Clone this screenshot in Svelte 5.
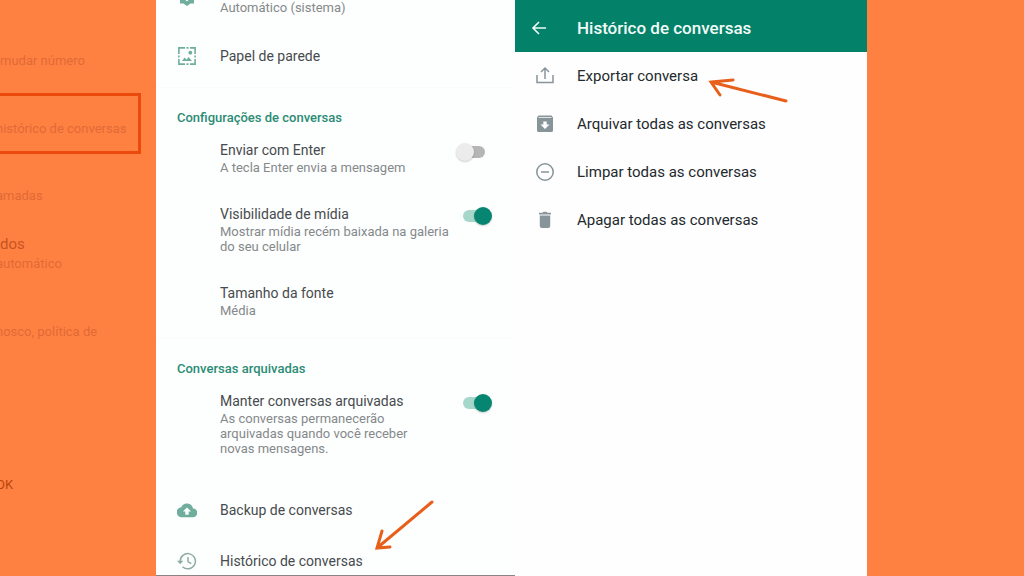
<script>
  let enterSends = false;
  let mediaVisible = true;
  let keepArchived = true;

  const historyActions = [
    { icon: 'export', label: 'Exportar conversa', marked: true },
    { icon: 'archive', label: 'Arquivar todas as conversas' },
    { icon: 'clear', label: 'Limpar todas as conversas' },
    { icon: 'trash', label: 'Apagar todas as conversas' }
  ];
</script>

<main class="page">
  <aside class="backdrop">
    <p class="number">mudar número</p>
    <p class="highlight">histórico de conversas</p>
    <p class="calls">amadas</p>
    <p class="data">dos</p>
    <p>automático</p>
    <p class="policy">nosco, política de</p>
    <p class="brand">OK</p>
  </aside>

  <section class="settings">
    <div class="group first">
      <button class="row theme">
        <svg class="icon cut" viewBox="0 0 20 6" aria-hidden="true">
          <path d="M3 0h5.500l1.500 1.500L11.500 0H17v3.500h-3.500L10 6 6.500 3.500H3z" />
        </svg>
        <span class="sub">Automático (sistema)</span>
      </button>
      <button class="row">
        <svg class="icon" viewBox="0 0 20 20" aria-hidden="true">
          <path
            d="M1.900 8V1.900H8M9.500 1.900h2M13 1.900h5.100V8M18.100 9.500v2M18.100 13v5.100H13M11.500 18.100h-2M8 18.100H1.900V13M1.900 11.500v-2"
            fill="none"
            stroke="currentColor"
            stroke-width="1.600"
          />
          <path d="M5 15l2.600-3.500 2 2.200 2-2.700L15 15z" />
          <circle cx="13.300" cy="6.700" r="1.900" />
        </svg>
        <span class="title">Papel de parede</span>
      </button>
    </div>

    <div class="group">
      <h2>Configurações de conversas</h2>
      <div class="rows">
        <label class="row">
          <span class="text">
            <span class="title">Enviar com Enter</span>
            <span class="sub">A tecla Enter envia a mensagem</span>
          </span>
          <input type="checkbox" bind:checked={enterSends} />
        </label>
        <label class="row">
          <span class="text">
            <span class="title">Visibilidade de mídia</span>
            <span class="sub">Mostrar mídia recém baixada na galeria<br />do seu celular</span>
          </span>
          <input type="checkbox" bind:checked={mediaVisible} />
        </label>
        <button class="row">
          <span class="text">
            <span class="title">Tamanho da fonte</span>
            <span class="sub">Média</span>
          </span>
        </button>
      </div>
    </div>

    <div class="group last">
      <h2>Conversas arquivadas</h2>
      <label class="row">
        <span class="text">
          <span class="title">Manter conversas arquivadas</span>
          <span class="sub">As conversas permanecerão<br />arquivadas quando você receber<br />novas mensagens.</span>
        </span>
        <input type="checkbox" bind:checked={keepArchived} />
      </label>

      <div class="rows links">
        <button class="row">
          <svg class="icon" viewBox="0 0 20 20" aria-hidden="true">
            <path
              fill-rule="evenodd"
              d="M16 8.400A6.200 6.200 0 0 0 4.300 7.200 5 5 0 0 0 5 17.200h10.800a4.400 4.400 0 0 0 .2-8.800zM11.700 11.600v3.200H8.300v-3.200H5.900L10 7.400l4.100 4.200z"
            />
          </svg>
          <span class="title">Backup de conversas</span>
        </button>
        <button class="row">
          <svg class="icon history" viewBox="0 0 20 20" aria-hidden="true">
            <path
              d="M3.200 10.500a7.600 7.600 0 1 1 2.300 5.200M11 6v4.700l3.300 2"
              fill="none"
              stroke="currentColor"
              stroke-width="1.500"
            />
            <path d="M0 9.800h6.400l-3.200 3.500z" />
          </svg>
          <span class="title marked">
            Histórico de conversas
            <svg class="arrow down" viewBox="0 0 60 52" aria-hidden="true">
              <path d="M58 3L3 49M8 32L3 49L16 48" />
            </svg>
          </span>
        </button>
      </div>
    </div>
  </section>

  <section class="history-panel">
    <header>
      <button class="back" aria-label="Voltar">
        <svg viewBox="0 0 16 16" aria-hidden="true">
          <path d="M15 8H2M8 2L2 8l6 6" />
        </svg>
      </button>
      <h1>Histórico de conversas</h1>
    </header>

    {#each historyActions as action}
      <button class="action">
        <svg class="icon" viewBox="0 0 20 20" aria-hidden="true">
          {#if action.icon === 'export'}
            <path
              d="M2 9v7.500h16V9M10 13V2.500M6 6l4-4 4 4"
              fill="none"
              stroke="currentColor"
              stroke-width="1.500"
            />
          {:else if action.icon === 'archive'}
            <path
              fill-rule="evenodd"
              d="M3.500 1.500h13L18 3.500V16.500a1.500 1.500 0 0 1-1.500 1.500h-13A1.500 1.500 0 0 1 2 16.500V3.500zM3.500 3.200v.8h13v-.8zM8.300 7.500v3H5.500l4.500 4.500 4.500-4.500h-2.800v-3z"
            />
          {:else if action.icon === 'clear'}
            <path
              d="M6 10h8M10 1.800a8.200 8.200 0 1 0 0 16.400 8.200 8.200 0 0 0 0-16.400z"
              fill="none"
              stroke="currentColor"
              stroke-width="1.500"
            />
          {:else}
            <path d="M4 2.800h3.500l1-1h3l1 1H16v1.600H4zM4.800 5.500h10.400V16a2 2 0 0 1-2 2H6.800a2 2 0 0 1-2-2z" />
          {/if}
        </svg>
        <span class:marked={action.marked}>
          {action.label}
          {#if action.marked}
            <svg class="arrow side" viewBox="0 0 80 26" aria-hidden="true">
              <path d="M78 23L3 4M25 2L3 4L12 17" />
            </svg>
          {/if}
        </span>
      </button>
    {/each}
  </section>
</main>

<style>
  :global(body) {
    margin: 0;
    background: #ff8142;
  }

  .page {
    display: grid;
    grid-template-columns: 156fr 359fr 352fr 157fr;
    min-height: 100vh;
    font-family: Roboto, 'Liberation Sans', sans-serif;
    font-size: 15px;
    line-height: 20px;
  }

  h1,
  h2,
  p {
    margin: 0;
  }

  button {
    border: none;
    padding: 0;
    background: none;
    color: inherit;
    font: inherit;
    text-align: left;
    cursor: pointer;
  }

  .backdrop {
    padding-top: 53px;
    overflow: hidden;
    color: #df6a36;
    font-size: 13px;
    line-height: 16px;
    text-indent: -4px;
    white-space: nowrap;
  }

  .number {
    text-indent: 0;
  }

  .highlight {
    margin: 24px 15px 34px 0;
    padding: 25px 0 14px;
    border: 3px solid #ec4a0c;
    border-left: none;
  }

  .data {
    margin: 30px 0 2px;
    color: #c9531f;
    font-size: 15px;
    line-height: 20px;
    text-indent: 0;
  }

  .policy {
    margin-top: 52px;
  }

  .brand {
    margin-top: 137px;
    color: #b8460f;
  }

  .settings {
    box-sizing: border-box;
    border-bottom: 1px solid #8a8583;
    background: #fdfefe;
    color: #474b4d;
  }

  .group {
    padding: 20px 23px 20px 21px;
    border-bottom: 1px solid #fafbfb;
  }

  .first {
    padding-top: 0;
    padding-bottom: 21px;
  }

  .last {
    padding-bottom: 4px;
    border-bottom: none;
  }

  h2 {
    margin-bottom: 12px;
    color: #2b8c74;
    font-size: 13px;
    font-weight: 500;
    line-height: 20px;
  }

  .rows {
    display: flex;
    flex-direction: column;
    gap: 29px;
  }

  .row {
    display: flex;
    align-items: flex-start;
    width: 100%;
  }

  .theme {
    margin-bottom: 31px;
  }

  .text {
    flex: 1;
    padding-left: 43px;
  }

  .title,
  .sub {
    display: block;
  }

  .title {
    font-size: 14px;
  }

  .sub {
    color: #85898b;
    font-size: 13px;
    line-height: 15px;
  }

  .icon {
    flex: none;
    width: 20px;
    height: 20px;
    margin-right: 23px;
    fill: currentColor;
    color: #6fae9d;
  }

  .cut {
    height: 6px;
  }

  .history {
    color: #8fada5;
  }

  .links {
    gap: 31px;
    margin-top: 44px;
  }

  input {
    position: relative;
    flex: none;
    width: 36px;
    height: 18px;
    margin: 3px 0 0;
    appearance: none;
    cursor: pointer;
  }

  input::before {
    content: '';
    position: absolute;
    inset: 3px 7px;
    border-radius: 6px;
    background: #b5b5b5;
  }

  input::after {
    content: '';
    position: absolute;
    top: 0;
    left: 0;
    width: 18px;
    height: 18px;
    border-radius: 50%;
    background: #ececec;
    box-shadow: 0 1px 2px rgba(0, 0, 0, 0.2);
  }

  input:checked::before {
    background: #a5d8cb;
  }

  input:checked::after {
    left: 18px;
    background: #068670;
  }

  .history-panel {
    background: #fefefe;
    color: #23292d;
  }

  header {
    display: flex;
    align-items: center;
    height: 52px;
    padding: 4px 16px 0;
    box-sizing: border-box;
    background: #038169;
    color: #f2fbf8;
  }

  .back {
    width: 16px;
    height: 16px;
    margin-right: 30px;
  }

  .back svg {
    display: block;
    fill: none;
    stroke: currentColor;
    stroke-width: 1.6;
  }

  h1 {
    font-size: 17px;
    font-weight: 500;
  }

  .action {
    display: flex;
    align-items: center;
    width: 100%;
    height: 48px;
    padding: 0 20px;
  }

  .action .icon {
    margin-right: 22px;
    color: #87949a;
  }

  .marked {
    position: relative;
  }

  .arrow {
    position: absolute;
    fill: none;
    stroke: #e85f1c;
    stroke-width: 3;
    stroke-linecap: round;
  }

  .down {
    bottom: 100%;
    left: calc(100% + 11px);
    width: 60px;
    height: 52px;
  }

  .side {
    top: 12px;
    left: calc(100% + 10px);
    width: 80px;
    height: 26px;
  }
</style>
